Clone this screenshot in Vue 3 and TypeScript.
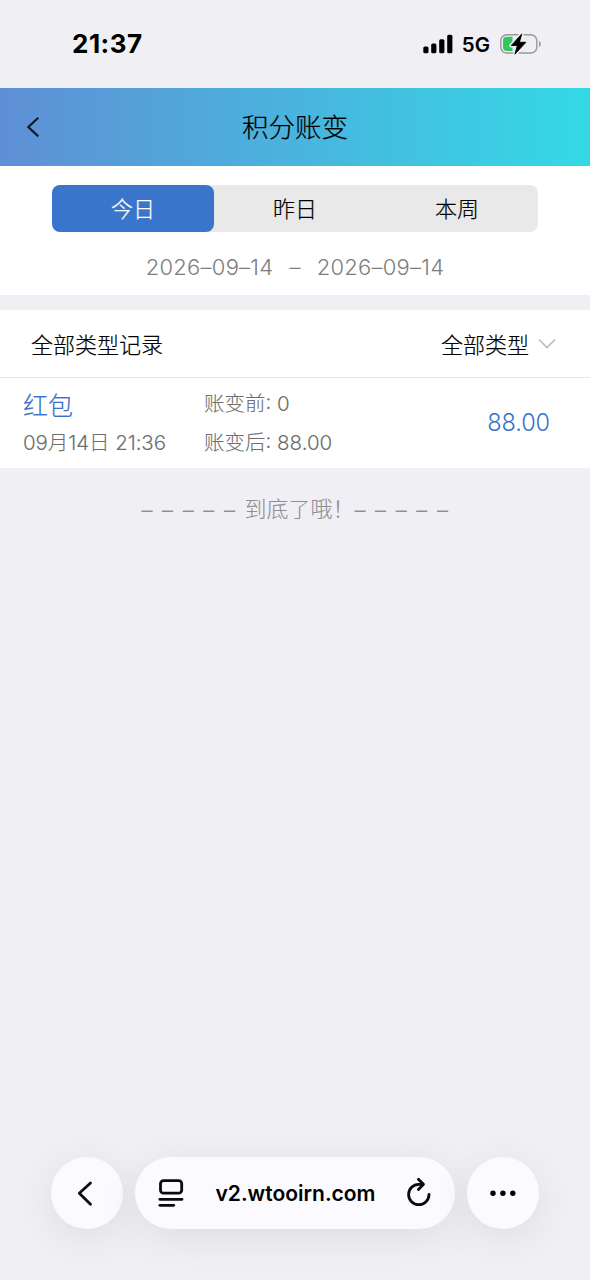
<script setup lang="ts">
import { ref } from 'vue'

interface AccountRecord {
  name: string
  time: string
  before: string
  after: string
  amount: string
}

const tabs: string[] = ['今日', '昨日', '本周']
const activeTab = ref(0)
const startDate = '2026–09–14'
const endDate = '2026–09–14'
const records: AccountRecord[] = [
  { name: '红包', time: '09月14日 21:36', before: '0', after: '88.00', amount: '88.00' },
]
</script>

<template>
  <div class="screen">
    <div class="status">
      <span class="clock">21:37</span>
      <div class="indicators">
        <svg class="signal" width="30" height="20" viewBox="0 0 30 20">
          <rect x="0.3" y="12.6" width="5.2" height="6.6" rx="1.5" />
          <rect x="8.2" y="9.6" width="5.2" height="9.6" rx="1.5" />
          <rect x="16.2" y="5.3" width="5.2" height="13.9" rx="1.5" />
          <rect x="24.2" y="0.7" width="5.2" height="18.5" rx="1.5" />
        </svg>
        <span class="network">5G</span>
        <svg class="battery" width="42" height="22" viewBox="0 0 42 22">
          <rect x="0.8" y="1.8" width="36" height="18.2" rx="6" fill="none" stroke="#98989d" stroke-width="1.4" />
          <path d="M39 8v6c2.400-.9 2.400-5.100 0-6z" fill="#98989d" />
          <path d="M7 3.800h5.500v14.200H7a4 4 0 0 1-4-4V7.800a4 4 0 0 1 4-4z" fill="#34c759" />
          <path d="M21.800 .9 11.300 12.500h6.100L14.900 21.200 25.900 9.300h-6.500z" fill="none" stroke="#efeff4" stroke-width="4" stroke-linejoin="round" />
          <path d="M21.800 .9 11.300 12.500h6.100L14.900 21.200 25.900 9.300h-6.500z" stroke="#000" stroke-width="0.900" stroke-linejoin="round" />
        </svg>
      </div>
    </div>

    <header class="navbar">
      <svg class="nav-back" width="16" height="24" viewBox="0 0 16 24">
        <path d="M13.300 2.700 3.300 12l10 9.400" />
      </svg>
      <h1 class="title">积分账变</h1>
    </header>

    <section class="filter">
      <div class="tabs">
        <button
          v-for="(tab, i) in tabs"
          :key="tab"
          class="tab"
          :class="{ active: i === activeTab }"
          @click="activeTab = i"
        >{{ tab }}</button>
      </div>
      <div class="range">
        <span>{{ startDate }}</span>
        <span>–</span>
        <span>{{ endDate }}</span>
      </div>
    </section>

    <section class="list">
      <div class="list-head">
        <span>全部类型记录</span>
        <span class="type">
          全部类型
          <svg width="18" height="12" viewBox="0 0 18 12"><path d="M1 1.500 9 9.500l8-8" /></svg>
        </span>
      </div>
      <div v-for="record in records" :key="record.time" class="record">
        <div class="main">
          <span class="name">{{ record.name }}</span>
          <span class="meta">{{ record.time }}</span>
        </div>
        <div class="change">
          <span class="meta">账变前: {{ record.before }}</span>
          <span class="meta">账变后: {{ record.after }}</span>
        </div>
        <span class="amount">{{ record.amount }}</span>
      </div>
    </section>

    <div class="end">
      <span class="dashes">–––––</span>
      <span class="end-text">到底了哦！</span>
      <span class="dashes">–––––</span>
    </div>

    <nav class="browser">
      <div class="round">
        <svg width="72" height="72" viewBox="0 0 72 72" class="line">
          <path d="M39.500 26 28.300 36.300l11.200 11" />
        </svg>
      </div>
      <div class="address">
        <svg width="28" height="32" viewBox="0 0 28 32" class="line reader">
          <rect x="2.500" y="3.600" width="21.200" height="12.600" rx="3" />
          <path d="M1.800 22.300h22.200M1.800 28.300h14" />
        </svg>
        <span class="url">v2.wtooirn.com</span>
        <svg width="28" height="32" viewBox="0 0 28 32" class="line">
          <path d="M24 17.500A10.200 10.200 0 1 1 13.800 7.300h4" />
          <path d="m13.400 2.300 5.100 5-5.100 5.200" />
        </svg>
      </div>
      <div class="round">
        <svg width="72" height="72" viewBox="0 0 72 72">
          <circle cx="26" cy="36.300" r="2.700" />
          <circle cx="35.900" cy="36.300" r="2.700" />
          <circle cx="45.800" cy="36.300" r="2.700" />
        </svg>
      </div>
    </nav>
  </div>
</template>

<style>
html,
body {
  margin: 0;
  background: #efeff4;
}
</style>

<style scoped>
.screen {
  display: flex;
  flex-direction: column;
  width: 590px;
  height: 1280px;
  overflow: hidden;
  background: #efeff4;
  color: #000;
  font-family: Inter, 'Noto Sans CJK SC', sans-serif;
  font-weight: 300;
}
svg {
  display: block;
  flex: none;
}
.status {
  display: flex;
  justify-content: space-between;
  height: 88px;
  padding: 0 48px 0 72px;
  box-sizing: border-box;
  flex: none;
}
.clock {
  font-size: 26px;
  font-weight: 750;
  letter-spacing: 0.5px;
  line-height: 88px;
}
.indicators {
  display: flex;
  align-items: center;
  height: 88px;
}
.signal {
  margin-right: 9px;
}
.network {
  margin-right: 10px;
  font-size: 20.5px;
  font-weight: 600;
}
.navbar {
  display: flex;
  align-items: center;
  height: 78px;
  padding: 0 25px;
  box-sizing: border-box;
  flex: none;
  background: linear-gradient(90deg, #5f8fd5, #34d9e6);
}
.nav-back {
  fill: none;
  stroke: #111a28;
  stroke-width: 2.2;
}
.title {
  flex: 1;
  margin: 0 16px 0 0;
  text-align: center;
  font-size: 26.5px;
  font-weight: 300;
  line-height: 78px;
  -webkit-text-stroke: 0.2px currentColor;
}
.filter {
  height: 129px;
  padding: 19px 52px 0;
  box-sizing: border-box;
  flex: none;
  background: #fff;
}
.tabs {
  display: flex;
  height: 47px;
  border-radius: 8px;
  background: #e9e9e9;
}
.tab {
  flex: 1;
  padding: 0 0 3px;
  border: 0;
  border-radius: 8px;
  background: transparent;
  color: #000;
  font: inherit;
  font-size: 22px;
  -webkit-text-stroke: 0.2px currentColor;
}
.tab.active {
  background: #3a75cc;
  color: #fff;
}
.range {
  display: flex;
  justify-content: center;
  gap: 16px;
  font-size: 22px;
  letter-spacing: 0.25px;
  line-height: 70px;
  color: #7d7d7d;
}
.list {
  height: 158px;
  margin-top: 15px;
  flex: none;
  background: #fff;
}
.list-head {
  display: flex;
  justify-content: space-between;
  align-items: center;
  height: 68px;
  padding: 0 34px 2px 31px;
  box-sizing: border-box;
  border-bottom: 1px solid #e6e6ea;
  font-size: 22px;
  -webkit-text-stroke: 0.2px currentColor;
}
.type {
  display: flex;
  align-items: center;
  gap: 9px;
}
.type svg {
  margin-top: 2px;
  fill: none;
  stroke: #bdbdc1;
  stroke-width: 1.6;
}
.record {
  display: grid;
  grid-template-columns: 181px 1fr auto;
  height: 90px;
  padding: 0 40px 0 23px;
}
.main,
.change {
  display: flex;
  flex-direction: column;
}
.name {
  height: 45px;
  font-size: 25px;
  line-height: 56px;
  color: #3a71c9;
  -webkit-text-stroke: 0.2px currentColor;
}
.meta {
  font-size: 20.5px;
  line-height: 39px;
  white-space: nowrap;
  color: #6e6e6e;
  -webkit-text-stroke: 0.1px currentColor;
}
.main .meta {
  letter-spacing: -0.08px;
}
.change {
  padding-top: 6px;
}
.amount {
  font-size: 23.5px;
  letter-spacing: -0.1px;
  line-height: 90px;
  color: #3a71c9;
}
.end {
  display: flex;
  justify-content: center;
  align-items: center;
  height: 80px;
  padding-left: 9px;
  font-size: 22px;
  color: #8e8e92;
  -webkit-text-stroke: 0.1px currentColor;
}
.end-text {
  margin-top: -2px;
}
.dashes {
  margin-top: 3px;
  letter-spacing: 9.6px;
}
.browser {
  display: flex;
  gap: 12px;
  margin: auto 51px 51px;
}
.round,
.address {
  height: 72px;
  background: #fbfbff;
  box-shadow: 0 8px 40px rgba(0, 0, 0, 0.08);
}
.round {
  width: 72px;
  border-radius: 50%;
}
.address {
  display: flex;
  align-items: center;
  justify-content: space-between;
  flex: 1;
  padding: 0 22px 0 23px;
  border-radius: 36px;
}
.line {
  fill: none;
  stroke: #0b0b0d;
  stroke-width: 2.8;
  stroke-linecap: round;
  stroke-linejoin: round;
}
.url {
  font-size: 21px;
  font-weight: 600;
}
</style>
